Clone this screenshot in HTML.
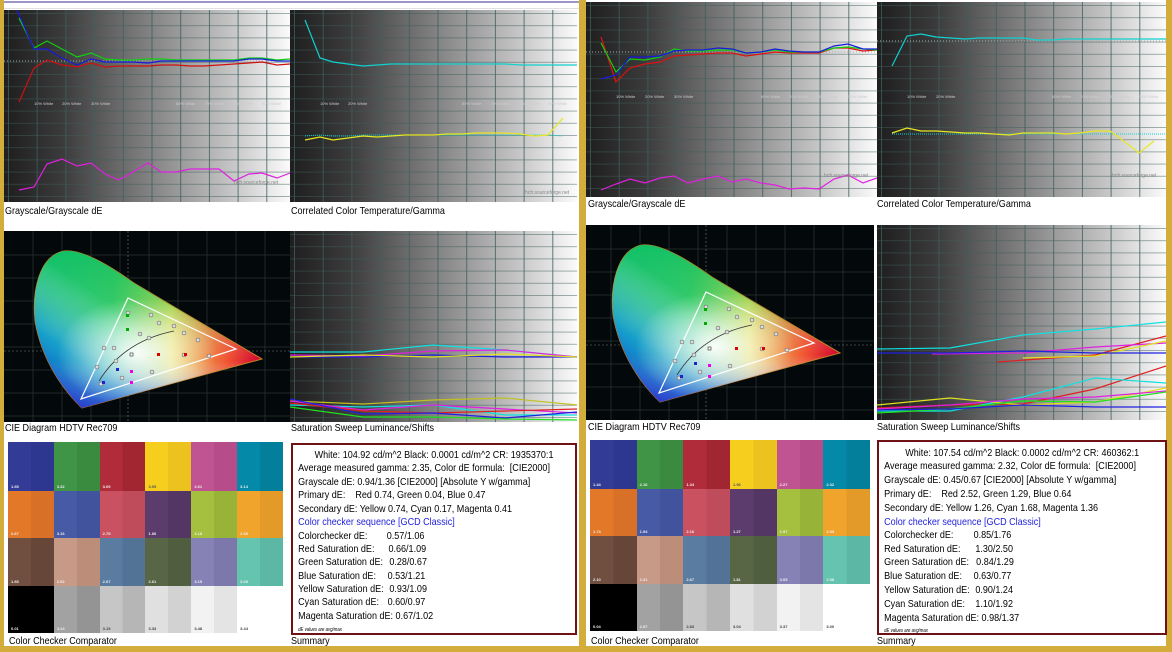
<!DOCTYPE html>
<html><head><meta charset="utf-8">
<style>
*{margin:0;padding:0;box-sizing:border-box}
body{width:1172px;height:652px;background:#d3ad3b;position:relative;overflow:hidden;font-family:"Liberation Sans",sans-serif;color:#000}
.ab{position:absolute}
.panel{position:absolute;background:#fff}
.lbl{position:absolute;font-size:10.5px;line-height:12px;white-space:nowrap;transform:scaleX(.86);transform-origin:0 0}
.sum{position:absolute;border:2px solid #6e1216;background:#fff;font-size:10.5px;overflow:hidden}
.in{position:absolute;left:0;top:0;width:116%;height:100%;transform:scaleX(.86);transform-origin:0 0}
.in div{position:absolute;left:6px;white-space:nowrap;line-height:12px}
.in span{position:absolute;white-space:nowrap;line-height:12px}
.chk{position:absolute;display:grid;grid-template-columns:repeat(6,1fr);grid-template-rows:49px 47px 48px 47px}
.chk>div{position:relative}
.chk b{position:absolute;left:3px;bottom:2px;font-size:4px;font-weight:bold;color:#eee}
</style></head><body>
<svg width="0" height="0" style="position:absolute">
<defs>
<linearGradient id="bg" x1="0" x2="1" y1="0" y2="0"><stop offset="0" stop-color="#1e1e1e"/><stop offset=".2" stop-color="#3a3a3a"/><stop offset=".5" stop-color="#808080"/><stop offset=".8" stop-color="#c6c6c6"/><stop offset="1" stop-color="#fbfbfb"/></linearGradient>
<pattern id="gv" width="28.7" height="400" patternUnits="userSpaceOnUse" x="4"><line x1="0.5" y1="0" x2="0.5" y2="400" stroke="#3e5c5c" stroke-width="1" stroke-opacity=".8"/></pattern>
<pattern id="gh" width="400" height="12.2" patternUnits="userSpaceOnUse" y="3"><line x1="0" y1="0.5" x2="400" y2="0.5" stroke="#3e5c5c" stroke-width="0.7" stroke-opacity=".65"/></pattern>
<linearGradient id="cieH" x1="0" x2="1" y1="0" y2="0"><stop offset="0" stop-color="#00c4b4"/><stop offset=".35" stop-color="#30d080"/><stop offset=".6" stop-color="#e8e060"/><stop offset=".85" stop-color="#f05030"/><stop offset="1" stop-color="#d00030"/></linearGradient>
<linearGradient id="cieV" x1="0" x2="0" y1="0" y2="1"><stop offset="0" stop-color="#10c060" stop-opacity=".9"/><stop offset=".4" stop-color="#40c040" stop-opacity=".3"/><stop offset=".7" stop-color="#ffffff" stop-opacity="0"/><stop offset="1" stop-color="#6010d0" stop-opacity=".8"/></linearGradient>
<radialGradient id="cieW" cx=".45" cy=".65" r=".35"><stop offset="0" stop-color="#fff" stop-opacity=".95"/><stop offset="1" stop-color="#fff" stop-opacity="0"/></radialGradient>
<linearGradient id="cieB" x1="0" x2="1" y1="1" y2="0"><stop offset="0" stop-color="#3010c0"/><stop offset=".25" stop-color="#1080e0" stop-opacity=".6"/><stop offset=".5" stop-color="#fff" stop-opacity="0"/></linearGradient>
<g id="cie">
<rect width="292" height="196" fill="#03080a"/>
<g stroke="#2a3232" stroke-width=".8"><line x1="29" y1="0" x2="29" y2="196"/><line x1="58" y1="0" x2="58" y2="196"/><line x1="87" y1="0" x2="87" y2="196"/><line x1="116" y1="0" x2="116" y2="196"/><line x1="145" y1="0" x2="145" y2="196"/><line x1="174" y1="0" x2="174" y2="196"/><line x1="203" y1="0" x2="203" y2="196"/><line x1="232" y1="0" x2="232" y2="196"/><line x1="261" y1="0" x2="261" y2="196"/>
<line x1="0" y1="24" x2="292" y2="24"/><line x1="0" y1="47" x2="292" y2="47"/><line x1="0" y1="70" x2="292" y2="70"/><line x1="0" y1="93" x2="292" y2="93"/><line x1="0" y1="116" x2="292" y2="116"/><line x1="0" y1="139" x2="292" y2="139"/><line x1="0" y1="162" x2="292" y2="162"/><line x1="0" y1="185" x2="292" y2="185"/></g>
<line x1="124" y1="0" x2="124" y2="196" stroke="#777" stroke-dasharray="2 2" stroke-width=".6"/>
<line x1="0" y1="120" x2="292" y2="120" stroke="#777" stroke-dasharray="2 2" stroke-width=".6"/>
<path d="M78 177 C60 160 38 130 31 90 C28 60 35 25 60 20 C80 18 110 38 130 52 L258 128 Z" fill="url(#cieH)" stroke="#c08020" stroke-width="1"/>
<path d="M78 177 C60 160 38 130 31 90 C28 60 35 25 60 20 C80 18 110 38 130 52 L258 128 Z" fill="url(#cieV)"/>
<path d="M78 177 C60 160 38 130 31 90 C28 60 35 25 60 20 C80 18 110 38 130 52 L258 128 Z" fill="url(#cieB)"/>
<path d="M78 177 C60 160 38 130 31 90 C28 60 35 25 60 20 C80 18 110 38 130 52 L258 128 Z" fill="url(#cieW)"/>
<path d="M124 67 L232 118 L77 168 Z" fill="none" stroke="#fff" stroke-width="1.2"/>
<path d="M95 150 Q120 110 170 100" fill="none" stroke="#333" stroke-width=".8"/>
<g fill="#ddd" stroke="#555" stroke-width=".5"><circle cx="124" cy="82" r="2"/><circle cx="147" cy="84" r="2"/><circle cx="155" cy="92" r="2"/><circle cx="170" cy="95" r="2"/><circle cx="180" cy="102" r="2"/><circle cx="194" cy="109" r="2"/><circle cx="110" cy="117" r="2"/><circle cx="100" cy="117" r="2"/><circle cx="93" cy="136" r="2"/><circle cx="118" cy="147" r="2"/><circle cx="148" cy="141" r="2"/><circle cx="180" cy="124" r="2"/><circle cx="205" cy="125" r="2"/><circle cx="136" cy="103" r="2"/><circle cx="145" cy="107" r="2"/><circle cx="112" cy="130" r="2"/><circle cx="97" cy="153" r="2"/></g>
<g><rect x="122" y="83" width="3" height="3" fill="#0a0"/><rect x="122" y="97" width="3" height="3" fill="#0a0"/><rect x="126" y="139" width="3" height="3" fill="#e0e"/><rect x="126" y="150" width="3" height="3" fill="#e0e"/><rect x="153" y="122" width="3" height="3" fill="#d00"/><rect x="180" y="122" width="3" height="3" fill="#d00"/><rect x="112" y="137" width="3" height="3" fill="#22c"/><rect x="98" y="150" width="3" height="3" fill="#22c"/><rect x="126" y="122" width="3" height="3" fill="#fff" stroke="#000" stroke-width=".5"/></g>
</g>
</defs></svg>

<!-- LEFT PANEL -->
<div class="panel" style="left:4px;top:0;width:575px;height:646px"></div>
<div class="ab" style="left:4px;top:1px;width:575px;height:2px;background:#9b95c8"></div>
<div class="ab" style="left:4px;top:8px;width:575px;height:1px;background:#e0e0e0"></div>

<svg class="ab" style="left:4px;top:10px" width="286" height="192">
<rect width="286" height="192" fill="url(#bg)"/><rect width="286" height="192" fill="url(#gv)"/><rect width="286" height="192" fill="url(#gh)"/>
<line x1="0" y1="51" x2="286" y2="51" stroke="#aaa" stroke-dasharray="1 2"/>
<polyline fill="none" stroke="#d01010" stroke-width="1.2" points="15,92 30,58 43,50 58,55 73,57 87,53 101,57 115,56 129,56 144,56 157,55 172,55 186,56 200,56 215,55 230,54 245,53 258,52 273,55 286,54"/>
<polyline fill="none" stroke="#10d010" stroke-width="1.2" points="15,8 30,38 43,31 58,39 73,47 87,43 101,49 115,50 129,50 144,49 157,49 172,50 186,50 200,50 215,50 230,50 245,48 258,48 273,50 286,49"/>
<polyline fill="none" stroke="#1818e0" stroke-width="1.2" points="13,0 30,39 43,39 58,48 73,55 87,49 101,52 115,52 129,52 144,53 157,51 172,51 186,51 200,51 215,51 230,51 245,49 258,49 273,51 286,51"/>
<polyline fill="none" stroke="#e020e0" stroke-width="1.2" points="15,180 30,177 43,154 58,149 73,156 87,153 101,164 115,170 129,162 144,153 157,162 172,162 186,159 200,159 215,159 230,171 245,164 258,163 273,168 286,163"/>
<g font-size="4" fill="#ccc"><text x="30" y="95">10% White</text><text x="58" y="95">20% White</text><text x="87" y="95">30% White</text><text x="172" y="95">60% White</text><text x="201" y="95">70% White</text><text x="230" y="95">80% White</text><text x="258" y="95">90% White</text></g>
<text x="230" y="174" font-size="5" fill="#888">hcfr.sourceforge.net</text>
</svg>

<svg class="ab" style="left:290px;top:10px" width="287" height="192">
<rect width="287" height="192" fill="url(#bg)"/><rect width="287" height="192" fill="url(#gv)"/><rect width="287" height="192" fill="url(#gh)"/>
<polyline fill="none" stroke="#10d0d0" stroke-width="1.2" points="15,10 30,48 43,52 58,54 73,56 87,55 101,54 115,54 129,54 144,54 157,54 172,54 186,54 200,54 215,54 230,55 245,55 258,55 273,55 287,55"/>
<polyline fill="none" stroke="#10d0d0" stroke-width="1" stroke-dasharray="1 1" points="15,126 30,125 43,126 58,126 73,125 87,125 101,125 115,125 129,125 144,125 157,125 172,125 186,125 200,125 215,125 230,125 245,125 258,125 273,126"/>
<polyline fill="none" stroke="#e8e820" stroke-width="1.2" points="15,130 30,127 43,130 58,128 73,126 87,127 101,126 115,125 129,125 144,125 157,124 172,124 186,123 200,123 215,123 230,124 245,126 258,125 273,108"/>
<g font-size="4" fill="#ccc"><text x="30" y="95">10% White</text><text x="58" y="95">20% White</text><text x="172" y="95">60% White</text><text x="201" y="95">70% White</text><text x="230" y="95">80% White</text><text x="258" y="95">90% White</text></g>
<text x="235" y="184" font-size="5" fill="#888">hcfr.sourceforge.net</text>
</svg>
<div class="lbl" style="left:5px;top:205px">Grayscale/Grayscale dE</div>
<div class="lbl" style="left:291px;top:205px">Correlated Color Temperature/Gamma</div>

<svg class="ab" style="left:4px;top:231px" width="286" height="191"><use href="#cie"/></svg>
<svg class="ab" style="left:290px;top:231px" width="287" height="191">
<rect width="287" height="191" fill="url(#bg)"/><rect width="287" height="191" fill="url(#gv)"/><rect width="287" height="191" fill="url(#gh)"/>
<polyline fill="none" stroke="#10e0e0" stroke-width="1.2" points="0,121 73,121 143,114 215,119 287,126"/>
<polyline fill="none" stroke="#e020e0" stroke-width="1.2" points="0,124 73,125 143,120 215,119 287,126"/>
<polyline fill="none" stroke="#2020e0" stroke-width="1.2" points="0,126 73,126 143,124 215,126 287,126"/>
<polyline fill="none" stroke="#e0e020" stroke-width="1.2" points="0,126 73,124 143,126 215,123 287,126"/>
<polyline fill="none" stroke="#c0c020" stroke-width="1.2" points="0,170 73,173 143,169 215,167 287,174"/>
<polyline fill="none" stroke="#10e0e0" stroke-width="1.2" points="0,174 73,176 143,174 215,184 287,184"/>
<polyline fill="none" stroke="#e020e0" stroke-width="1.2" points="0,170 73,179 143,174 215,178 287,182"/>
<polyline fill="none" stroke="#e02020" stroke-width="1.2" points="0,172 73,180 143,182 215,180 287,178"/>
<polyline fill="none" stroke="#2020e0" stroke-width="1.2" points="0,168 73,183 143,182 215,187 287,181"/>
<polyline fill="none" stroke="#20e020" stroke-width="1.2" points="0,176 73,186 143,186 215,188 287,189"/>
</svg>
<div class="lbl" style="left:5px;top:422px">CIE Diagram HDTV Rec709</div>
<div class="lbl" style="left:291px;top:422px">Saturation Sweep Luminance/Shifts</div>

<div class="chk" style="left:8px;top:442px;width:275px;height:191px">
<div style="background:linear-gradient(90deg,#323c96 50%,#2d3790 50%)"><b>1.65</b></div>
<div style="background:linear-gradient(90deg,#3f9446 50%,#3a8a40 50%)"><b>3.32</b></div>
<div style="background:linear-gradient(90deg,#b02c3a 50%,#a22632 50%)"><b>3.09</b></div>
<div style="background:linear-gradient(90deg,#f6cf1e 50%,#ecc21e 50%)"><b style="color:#555">3.05</b></div>
<div style="background:linear-gradient(90deg,#c05492 50%,#b64c8a 50%)"><b>2.61</b></div>
<div style="background:linear-gradient(90deg,#048aa8 50%,#037f9c 50%)"><b>3.14</b></div>
<div style="background:linear-gradient(90deg,#e27828 50%,#d87028 50%)"><b>2.67</b></div>
<div style="background:linear-gradient(90deg,#465aa6 50%,#40539c 50%)"><b>3.16</b></div>
<div style="background:linear-gradient(90deg,#ca5260 50%,#be4c5a 50%)"><b>2.79</b></div>
<div style="background:linear-gradient(90deg,#5c3c6c 50%,#533664 50%)"><b>1.66</b></div>
<div style="background:linear-gradient(90deg,#a4c03e 50%,#98b438 50%)"><b>3.18</b></div>
<div style="background:linear-gradient(90deg,#f0a42c 50%,#e49a28 50%)"><b>2.65</b></div>
<div style="background:linear-gradient(90deg,#704e40 50%,#664638 50%)"><b>1.65</b></div>
<div style="background:linear-gradient(90deg,#c69a86 50%,#bc8e7a 50%)"><b>2.92</b></div>
<div style="background:linear-gradient(90deg,#5a7ca0 50%,#527296 50%)"><b>2.67</b></div>
<div style="background:linear-gradient(90deg,#586646 50%,#505e40 50%)"><b>2.61</b></div>
<div style="background:linear-gradient(90deg,#8682b6 50%,#7c78ac 50%)"><b>3.15</b></div>
<div style="background:linear-gradient(90deg,#64c4b0 50%,#5cb8a4 50%)"><b>3.09</b></div>
<div style="background:#000"><b>0.01</b></div>
<div style="background:linear-gradient(90deg,#a2a2a2 50%,#949494 50%)"><b>3.24</b></div>
<div style="background:linear-gradient(90deg,#c6c6c6 50%,#b6b6b6 50%)"><b style="color:#444">3.15</b></div>
<div style="background:linear-gradient(90deg,#e0e0e0 50%,#d2d2d2 50%)"><b style="color:#444">3.33</b></div>
<div style="background:linear-gradient(90deg,#f2f2f2 50%,#e4e4e4 50%)"><b style="color:#444">3.48</b></div>
<div style="background:#fff"><b style="color:#444">3.44</b></div>
</div>
<div class="lbl" style="left:9px;top:635px">Color Checker Comparator</div>
<div class="lbl" style="left:291px;top:635px">Summary</div>

<div class="sum" style="left:291px;top:443px;width:286px;height:192px"><div class="in">
<div style="left:0;width:328px;text-align:center;top:4px">White: 104.92 cd/m^2 Black: 0.0001 cd/m^2 CR: 1935370:1</div>
<div style="top:17px">Average measured gamma: 2.35, Color dE formula:&nbsp; [CIE2000]</div>
<div style="top:31px">Grayscale dE: 0.94/1.36 [CIE2000] [Absolute Y w/gamma]</div>
<div style="top:44px">Primary dE:&nbsp;&nbsp;&nbsp; Red 0.74, Green 0.04, Blue 0.47</div>
<div style="top:58px">Secondary dE: Yellow 0.74, Cyan 0.17, Magenta 0.41</div>
<div style="top:71px;color:#2222dd">Color checker sequence [GCD Classic]</div>
<div style="top:85px">Colorchecker dE:</div><span style="left:109px;top:85px">0.57/1.06</span>
<div style="top:98px">Red Saturation dE:</div><span style="left:111px;top:98px">0.66/1.09</span>
<div style="top:111px">Green Saturation dE:</div><span style="left:112px;top:111px">0.28/0.67</span>
<div style="top:125px">Blue Saturation dE:</div><span style="left:110px;top:125px">0.53/1.21</span>
<div style="top:138px">Yellow Saturation dE:</div><span style="left:112px;top:138px">0.93/1.09</span>
<div style="top:151px">Cyan Saturation dE:</div><span style="left:110px;top:151px">0.60/0.97</span>
<div style="top:165px">Magenta Saturation dE: 0.67/1.02</div>
<div style="top:179px;font-size:5px;font-style:italic">dE values are avg/max</div>
</div></div>

<!-- RIGHT PANEL -->
<div class="panel" style="left:586px;top:0;width:580px;height:646px"></div>
<svg class="ab" style="left:586px;top:2px" width="291" height="195">
<rect width="291" height="195" fill="url(#bg)"/><rect width="291" height="195" fill="url(#gv)"/><rect width="291" height="195" fill="url(#gh)"/>
<line x1="0" y1="50" x2="291" y2="50" stroke="#aaa" stroke-dasharray="1 2"/>
<polyline fill="none" stroke="#e01010" stroke-width="1.2" points="15,35 30,80 44,66 59,62 74,60 88,54 102,53 117,52 132,51 146,51 160,54 175,52 189,50 203,51 218,51 233,51 248,46 262,46 277,49 291,48"/>
<polyline fill="none" stroke="#10d010" stroke-width="1.2" points="15,41 30,70 44,57 59,58 74,55 88,47 102,49 117,49 132,48 146,48 160,51 175,50 189,48 203,50 218,50 233,50 248,46 262,45 277,47 291,48"/>
<polyline fill="none" stroke="#1818e0" stroke-width="1.2" points="15,77 30,73 44,55 59,55 74,54 88,49 102,48 117,48 132,46 146,47 160,51 175,50 189,47 203,49 218,50 233,50 248,44 262,42 277,47 291,47"/>
<polyline fill="none" stroke="#e020e0" stroke-width="1.2" points="15,188 30,182 44,177 59,181 74,176 88,174 102,181 117,177 132,174 146,180 160,177 175,181 189,183 203,187 218,186 233,187 248,177 262,173 277,181 291,176"/>
<g font-size="4" fill="#ccc"><text x="30" y="96">10% White</text><text x="59" y="96">20% White</text><text x="88" y="96">30% White</text><text x="175" y="96">60% White</text><text x="203" y="96">70% White</text><text x="233" y="96">80% White</text><text x="262" y="96">90% White</text></g>
<text x="238" y="175" font-size="5" fill="#888">hcfr.sourceforge.net</text>
</svg>
<svg class="ab" style="left:877px;top:2px" width="289" height="195">
<rect width="289" height="195" fill="url(#bg)"/><rect width="289" height="195" fill="url(#gv)"/><rect width="289" height="195" fill="url(#gh)"/>
<line x1="0" y1="39" x2="289" y2="39" stroke="#aaa" stroke-dasharray="1 2"/>
<polyline fill="none" stroke="#10d0d0" stroke-width="1.2" points="15,64 30,34 44,32 59,35 74,36 88,37 102,36 117,36 132,36 146,36 160,38 175,38 189,37 203,37 218,37 233,37 248,37 262,37 277,37 289,37"/>
<polyline fill="none" stroke="#10d0d0" stroke-width="1" stroke-dasharray="1 1" points="15,132 289,132"/>
<polyline fill="none" stroke="#e8e820" stroke-width="1.2" points="15,131 30,126 44,129 59,129 74,130 88,131 102,131 117,132 132,133 146,131 160,131 175,131 189,132 203,131 218,129 233,129 248,140 262,151 277,139"/>
<g font-size="4" fill="#ccc"><text x="30" y="96">10% White</text><text x="59" y="96">20% White</text><text x="175" y="96">60% White</text><text x="203" y="96">70% White</text><text x="233" y="96">80% White</text><text x="262" y="96">90% White</text></g>
<text x="235" y="175" font-size="5" fill="#888">hcfr.sourceforge.net</text>
</svg>
<div class="lbl" style="left:588px;top:198px">Grayscale/Grayscale dE</div>
<div class="lbl" style="left:877px;top:198px">Correlated Color Temperature/Gamma</div>

<svg class="ab" style="left:586px;top:225px" width="291" height="195"><g transform="translate(-4,0)"><use href="#cie"/></g></svg>
<svg class="ab" style="left:877px;top:225px" width="289" height="195">
<rect width="289" height="195" fill="url(#bg)"/><rect width="289" height="195" fill="url(#gv)"/><rect width="289" height="195" fill="url(#gh)"/>
<polyline fill="none" stroke="#10e0e0" stroke-width="1.2" points="0,124 73,123 146,110 218,104 289,97"/>
<polyline fill="none" stroke="#e02020" stroke-width="1.2" points="120,137 218,130 289,111"/>
<polyline fill="none" stroke="#e020e0" stroke-width="1.2" points="55,129 146,128 218,122 289,118"/>
<polyline fill="none" stroke="#e0e020" stroke-width="1.2" points="146,133 218,131 289,116"/>
<polyline fill="none" stroke="#2020e0" stroke-width="1.2" points="0,128 73,128 146,126 218,128 289,128"/>
<polyline fill="none" stroke="#e02020" stroke-width="1.2" points="0,183 73,180 146,179 218,164 289,141"/>
<polyline fill="none" stroke="#10e0e0" stroke-width="1.2" points="0,186 73,186 146,172 218,153 289,158"/>
<polyline fill="none" stroke="#e0e020" stroke-width="1.2" points="0,180 73,173 146,180 218,177 289,163"/>
<polyline fill="none" stroke="#e020e0" stroke-width="1.2" points="0,184 73,180 146,174 218,172 289,166"/>
<polyline fill="none" stroke="#20e020" stroke-width="1.2" points="0,188 73,184 146,176 218,177 289,167"/>
<polyline fill="none" stroke="#2020e0" stroke-width="1.2" points="0,185 73,184 146,180 218,182 289,182"/>
</svg>
<div class="lbl" style="left:588px;top:421px">CIE Diagram HDTV Rec709</div>
<div class="lbl" style="left:877px;top:421px">Saturation Sweep Luminance/Shifts</div>

<div class="chk" style="left:590px;top:440px;width:280px;height:193px">
<div style="background:linear-gradient(90deg,#323c96 50%,#2d3790 50%)"><b>1.44</b></div>
<div style="background:linear-gradient(90deg,#3f9446 50%,#3a8a40 50%)"><b>2.16</b></div>
<div style="background:linear-gradient(90deg,#b02c3a 50%,#a22632 50%)"><b>1.34</b></div>
<div style="background:linear-gradient(90deg,#f6cf1e 50%,#ecc21e 50%)"><b style="color:#555">1.96</b></div>
<div style="background:linear-gradient(90deg,#c05492 50%,#b64c8a 50%)"><b>2.27</b></div>
<div style="background:linear-gradient(90deg,#048aa8 50%,#037f9c 50%)"><b>2.32</b></div>
<div style="background:linear-gradient(90deg,#e27828 50%,#d87028 50%)"><b>1.74</b></div>
<div style="background:linear-gradient(90deg,#465aa6 50%,#40539c 50%)"><b>1.94</b></div>
<div style="background:linear-gradient(90deg,#ca5260 50%,#be4c5a 50%)"><b>2.16</b></div>
<div style="background:linear-gradient(90deg,#5c3c6c 50%,#533664 50%)"><b>1.27</b></div>
<div style="background:linear-gradient(90deg,#a4c03e 50%,#98b438 50%)"><b>1.97</b></div>
<div style="background:linear-gradient(90deg,#f0a42c 50%,#e49a28 50%)"><b>2.03</b></div>
<div style="background:linear-gradient(90deg,#704e40 50%,#664638 50%)"><b>2.10</b></div>
<div style="background:linear-gradient(90deg,#c69a86 50%,#bc8e7a 50%)"><b>2.31</b></div>
<div style="background:linear-gradient(90deg,#5a7ca0 50%,#527296 50%)"><b>2.67</b></div>
<div style="background:linear-gradient(90deg,#586646 50%,#505e40 50%)"><b>1.81</b></div>
<div style="background:linear-gradient(90deg,#8682b6 50%,#7c78ac 50%)"><b>3.05</b></div>
<div style="background:linear-gradient(90deg,#64c4b0 50%,#5cb8a4 50%)"><b>2.58</b></div>
<div style="background:#000"><b>0.04</b></div>
<div style="background:linear-gradient(90deg,#a2a2a2 50%,#949494 50%)"><b>2.97</b></div>
<div style="background:linear-gradient(90deg,#c6c6c6 50%,#b6b6b6 50%)"><b style="color:#444">2.83</b></div>
<div style="background:linear-gradient(90deg,#e0e0e0 50%,#d2d2d2 50%)"><b style="color:#444">3.04</b></div>
<div style="background:linear-gradient(90deg,#f2f2f2 50%,#e4e4e4 50%)"><b style="color:#444">3.37</b></div>
<div style="background:#fff"><b style="color:#444">3.00</b></div>
</div>
<div class="lbl" style="left:591px;top:635px">Color Checker Comparator</div>
<div class="lbl" style="left:877px;top:635px">Summary</div>

<div class="sum" style="left:877px;top:440px;width:290px;height:195px"><div class="in">
<div style="left:0;width:333px;text-align:center;top:5px">White: 107.54 cd/m^2 Black: 0.0002 cd/m^2 CR: 460362:1</div>
<div style="top:18px">Average measured gamma: 2.32, Color dE formula:&nbsp; [CIE2000]</div>
<div style="top:32px">Grayscale dE: 0.45/0.67 [CIE2000] [Absolute Y w/gamma]</div>
<div style="top:46px">Primary dE:&nbsp;&nbsp;&nbsp; Red 2.52, Green 1.29, Blue 0.64</div>
<div style="top:60px">Secondary dE: Yellow 1.26, Cyan 1.68, Magenta 1.36</div>
<div style="top:74px;color:#2222dd">Color checker sequence [GCD Classic]</div>
<div style="top:87px">Colorchecker dE:</div><span style="left:110px;top:87px">0.85/1.76</span>
<div style="top:101px">Red Saturation dE:</div><span style="left:112px;top:101px">1.30/2.50</span>
<div style="top:114px">Green Saturation dE:</div><span style="left:113px;top:114px">0.84/1.29</span>
<div style="top:128px">Blue Saturation dE:</div><span style="left:110px;top:128px">0.63/0.77</span>
<div style="top:142px">Yellow Saturation dE:</div><span style="left:112px;top:142px">0.90/1.24</span>
<div style="top:156px">Cyan Saturation dE:</div><span style="left:112px;top:156px">1.10/1.92</span>
<div style="top:170px">Magenta Saturation dE: 0.98/1.37</div>
<div style="top:183px;font-size:5px;font-style:italic">dE values are avg/max</div>
</div></div>
</body></html>
